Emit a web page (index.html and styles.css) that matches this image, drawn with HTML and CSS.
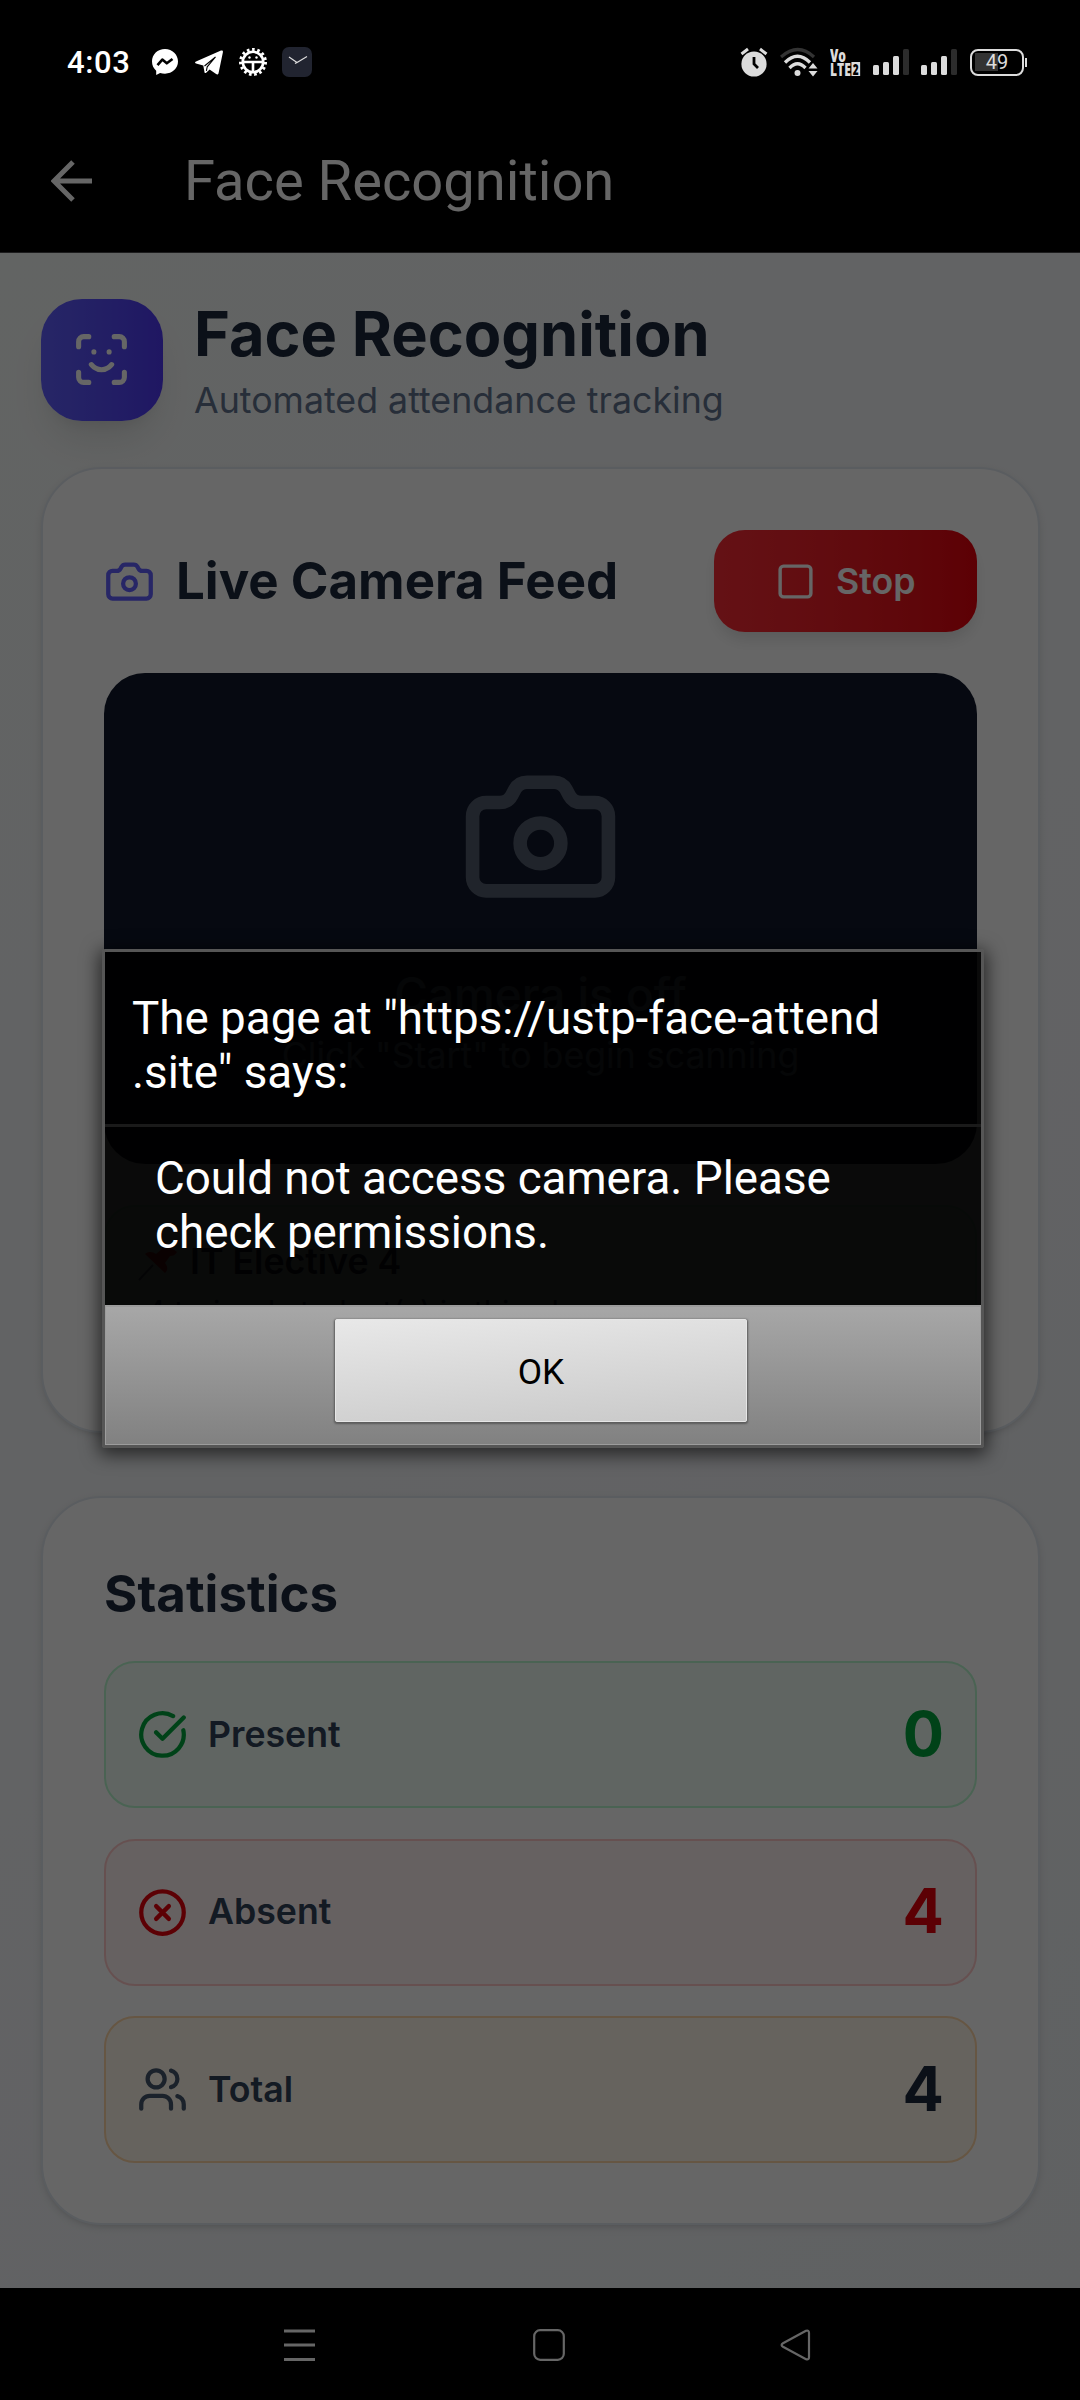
FILE: index.html
```html
<!DOCTYPE html>
<html lang="en">
<head>
<meta charset="utf-8">
<title>Face Recognition</title>
<link rel="stylesheet" href="styles.css">
</head>
<body>
<div class="screen">
  <div class="status">
    <div class="status-left">
      <span class="time">4:03</span>
      <svg class="ic-msgr" width="26" height="26" viewBox="0 0 26 26"><path fill="#fff" d="M13 0C5.600 0 0 5.400 0 12.600c0 3.800 1.600 7 4.200 9.200V26l3.900-2.100c1.500.5 3.200.8 4.900.8 7.400 0 13-5.300 13-12.100S20.400 0 13 0z"/><path fill="none" stroke="#000" stroke-width="2.600" stroke-linejoin="round" d="M5.500 16.200l4.800-5.600 4.500 3.700 5.700-4.300"/></svg>
      <svg class="ic-tg" width="28" height="25" viewBox="0 0 28 25"><path fill="#fff" d="M1 11.500 26 .6c1.300-.5 2.200.2 1.900 1.700L23.600 23c-.3 1.500-1.300 1.900-2.500 1.100l-6.500-4.700-3.400 3.300c-.8.7-1.500.5-1.700-.5L8.300 15.600 1 13.400c-1.300-.4-1.300-1.300 0-1.900z"/><path fill="none" stroke="#000" stroke-width="1.100" d="M9.500 16 20.500 7l-8.300 9.800-.8 4"/></svg>
      <svg class="ic-gear" width="30" height="30" viewBox="0 0 30 30"><circle cx="15" cy="15" r="12.500" fill="none" stroke="#fff" stroke-width="3" stroke-dasharray="2.600 2.636"/><circle cx="15" cy="15" r="10.200" fill="none" stroke="#fff" stroke-width="2.600"/><path stroke="#fff" stroke-width="2.600" d="M5 15h20M15 15v10" fill="none"/><circle cx="11.500" cy="10.500" r="1.200" fill="#fff"/><circle cx="18.500" cy="10.500" r="1.200" fill="#fff"/></svg>
      <svg class="ic-clock" width="30" height="30" viewBox="0 0 30 30"><rect width="30" height="30" rx="7" fill="#212430"/><path d="M7 10l8 5.500L25 9.500M13 16.500l2-1" stroke="#ddd" stroke-width="1.200" fill="none"/></svg>
    </div>
    <div class="status-right">
      <svg class="ic-alarm" width="28" height="30" viewBox="0 0 28 30"><circle cx="14" cy="17" r="12.600" fill="#dcdcdc"/><path d="M1.500 7 8 2M26.500 7 20 2" stroke="#dcdcdc" stroke-width="3"/><path d="M14 10v7l4 4" fill="none" stroke="#000" stroke-width="2.800"/></svg>
      <svg class="ic-wifi" width="38" height="30" viewBox="0 0 38 30"><g fill="none" stroke-width="3.300"><path stroke="#333" d="M1 10Q18 -5 34 10"/><path stroke="#dcdcdc" d="M5 15.500Q17.500 3 30 15.500M9.500 21Q17.500 12.500 25.500 21"/></g><circle cx="17.500" cy="26" r="3" fill="#dcdcdc"/><path fill="#dcdcdc" d="M28.500 21.500h9l-4.500-5.500zM28.500 24h9L33 29.500z"/></svg>
      <div class="volte"><b>Vo</b><b>LTE<i>2</i></b></div>
      <div class="bars"><i class="b1"></i><i class="b2"></i><i class="b3"></i><i class="b4"></i></div>
      <div class="bars"><i class="b1"></i><i class="b2"></i><i class="b3"></i><i class="b4"></i></div>
      <div class="battery"><span>49</span></div>
    </div>
  </div>

  <header class="appbar">
    <svg width="42" height="42" viewBox="0 0 42 42"><path d="M41 21H4M22 2 3 21l19 19" fill="none" stroke="#fff" stroke-width="5"/></svg>
    <span>Face Recognition</span>
  </header>

  <main class="content">
    <section class="hero">
      <div class="logo">
        <svg class="lucide" width="61" height="61" viewBox="0 0 24 24"><path d="M3 7V5a2 2 0 0 1 2-2h2M17 3h2a2 2 0 0 1 2 2v2M21 17v2a2 2 0 0 1-2 2h-2M7 21H5a2 2 0 0 1-2-2v-2M8 14s1.500 2 4 2 4-2 4-2M9 9h.01M15 9h.01"/></svg>
      </div>
      <div>
        <h1>Face Recognition</h1>
        <p>Automated attendance tracking</p>
      </div>
    </section>

    <section class="card feed">
      <div class="feed-head">
        <svg class="lucide cam" width="51" height="51" viewBox="0 0 24 24"><path d="M13.997 4a2 2 0 0 1 1.760 1.050l.486.9A2 2 0 0 0 18.003 7H20a2 2 0 0 1 2 2v9a2 2 0 0 1-2 2H4a2 2 0 0 1-2-2V9a2 2 0 0 1 2-2h1.997a2 2 0 0 0 1.759-1.048l.489-.904A2 2 0 0 1 10.004 4z"/><circle cx="12" cy="13" r="3"/></svg>
        <h2>Live Camera Feed</h2>
        <div class="stop">
          <svg class="lucide" width="41" height="41" viewBox="0 0 24 24"><rect x="3" y="3" width="18" height="18" rx="2"/></svg>
          <span>Stop</span>
        </div>
      </div>
      <div class="video">
        <svg class="lucide" width="163" height="163" viewBox="0 0 24 24"><path d="M13.997 4a2 2 0 0 1 1.760 1.050l.486.9A2 2 0 0 0 18.003 7H20a2 2 0 0 1 2 2v9a2 2 0 0 1-2 2H4a2 2 0 0 1-2-2V9a2 2 0 0 1 2-2h1.997a2 2 0 0 0 1.759-1.048l.489-.904A2 2 0 0 1 10.004 4z"/><circle cx="12" cy="13" r="3"/></svg>
        <p class="off">Camera is off</p>
        <p class="hint">Click "Start" to begin scanning</p>
      </div>
      <div class="info">
        <p class="subject"><svg width="40" height="40" viewBox="0 0 40 40"><path d="M1 38 15 23" stroke="#6b7580" stroke-width="2"/><path fill="#ff2a1a" d="M7 12c4-3 8-2 11 0l6-5c-1-3 0-5 2-7l13 10c-2 3-4 4-7 4l-5 7c3 4 3 7 0 10z"/></svg>IT Elective 4</p>
        <p class="trained">4 trained student(s) in this class</p>
      </div>
    </section>

    <section class="card stats">
      <h2>Statistics</h2>
      <div class="row present">
        <svg class="lucide" width="51" height="51" viewBox="0 0 24 24"><path d="M21.801 10A10 10 0 1 1 17 3.335M9 11l3 3L22 4"/></svg>
        <span>Present</span><b>0</b>
      </div>
      <div class="row absent">
        <svg class="lucide" width="51" height="51" viewBox="0 0 24 24"><circle cx="12" cy="12" r="10"/><path d="m15 9-6 6M9 9l6 6"/></svg>
        <span>Absent</span><b>4</b>
      </div>
      <div class="row total">
        <svg class="lucide" width="51" height="51" viewBox="0 0 24 24"><path d="M16 21v-2a4 4 0 0 0-4-4H6a4 4 0 0 0-4 4v2M22 21v-2a4 4 0 0 0-3-3.870M16 3.130a4 4 0 0 1 0 7.750"/><circle cx="9" cy="7" r="4"/></svg>
        <span>Total</span><b>4</b>
      </div>
    </section>
  </main>

  <nav class="navbar">
    <svg width="31" height="32" viewBox="0 0 31 32"><path d="M0 2h31M0 16h31M0 30.500h31" stroke-width="2.800"/></svg>
    <svg width="32" height="32" viewBox="0 0 32 32"><rect x="1.200" y="1.200" width="29.600" height="29.600" rx="6" stroke-width="2.200"/></svg>
    <svg width="31" height="32" viewBox="0 0 31 32"><path d="M26 1.800 3 14.300q-2.800 1.700 0 3.400L26 30.200q3 1 3-2V3.800q0-3-3-2z" stroke-width="2.200"/></svg>
  </nav>

  <div class="scrim"></div>

  <div class="dialog">
    <div class="dialog-title">The page at "https://ustp-face-attend<br>.site" says:</div>
    <div class="dialog-body">Could not access camera. Please<br>check permissions.</div>
    <div class="dialog-foot"><div class="ok">OK</div></div>
  </div>
</div>
</body>
</html>
```

FILE: styles.css
```css
* { box-sizing: border-box; }
body { margin: 0; background: #000; }
h1, h2, p { margin: 0; }
svg { display: block; flex: none; }

.screen {
  position: relative;
  width: 1080px;
  height: 2400px;
  overflow: hidden;
  display: flex;
  flex-direction: column;
  background: #000;
  font-family: Inter, sans-serif;
}

.lucide {
  fill: none;
  stroke: currentColor;
  stroke-width: 2;
  stroke-linecap: round;
  stroke-linejoin: round;
}

/* Status bar stays above the scrim */
.status {
  position: relative;
  z-index: 3;
  height: 124px;
  padding: 0 56px 0 67px;
  display: flex;
  justify-content: space-between;
  font-family: Roboto, sans-serif;
}
.status-left, .status-right { display: flex; align-items: center; height: 124px; }
.time { width: 85px; padding-top: 1px; color: #fff; font-size: 31px; font-weight: 500; line-height: 36px; letter-spacing: .6px; }
.ic-tg { margin-left: 17px; }
.ic-gear { margin-left: 15px; }
.ic-clock { margin-left: 14px; }
.ic-wifi { margin-left: 12px; }
.volte { width: 31px; margin-left: 12px; color: #dcdcdc; font: 700 18px/14px "Open Sans", sans-serif; }
.volte b { display: flex; width: 46px; height: 14px; transform: scaleX(.67); transform-origin: 0 50%; }
.volte i { margin-left: 1px; padding: 0 2px; background: #dcdcdc; color: #000; font-style: normal; font-size: 15px; }
.bars { display: flex; align-items: flex-end; gap: 4px; height: 27px; margin: -2px 0 0 12px; }
.bars i { width: 6px; border-radius: 1.5px; background: #dcdcdc; }
.bars .b1 { height: 10px; }
.bars .b2 { height: 13px; }
.bars .b3 { height: 19px; }
.bars .b4 { height: 26px; background: #2c2c2c; }
.battery {
  position: relative;
  width: 54px;
  height: 27px;
  margin-left: 13px;
  border: 2px solid #dcdcdc;
  border-radius: 8px;
  display: flex;
  align-items: center;
  justify-content: center;
  background: linear-gradient(#333, #333) 3px 50% / 23px 18px no-repeat;
  color: #dcdcdc;
  font-size: 20px;
  line-height: 23px;
}
.battery::after {
  content: "";
  position: absolute;
  right: -5px;
  top: 7px;
  width: 2px;
  height: 9px;
  background: #dcdcdc;
}

.appbar {
  height: 128px;
  padding: 0 51px 15px;
  display: flex;
  align-items: center;
  gap: 91px;
  color: #fff;
  font: 400 56.1px/66px Roboto, sans-serif;
}

.content {
  height: 2036px;
  padding: 46px 40px 0 41px;
  border-top: 1px solid #46464a;
  background: linear-gradient(135deg, #f6f9f8, #f5f7fa 50%, #f0f3f6);
}
.hero { display: flex; gap: 31px; height: 122px; margin-bottom: 46px; }
.logo {
  width: 122px;
  height: 122px;
  padding: 0 1px 1px 0;
  border-radius: 41px;
  display: flex;
  align-items: center;
  justify-content: center;
  color: #fff;
  background: linear-gradient(90deg in oklab, #615fff, #4f39f6);
  box-shadow: 0 25px 38px -8px rgba(0, 0, 0, .1), 0 10px 15px -10px rgba(0, 0, 0, .1);
}
.hero h1 { color: #1d293d; font-size: 61.3px; line-height: 71px; font-weight: 700; }
.hero p { color: #62748e; font-size: 35.75px; line-height: 51px; margin-top: 5px; }

.card {
  border: 2px solid #e2e8f0;
  border-radius: 61px;
  padding: 61px;
  background: #fff;
  box-shadow: 0 3px 8px rgba(0, 0, 0, .1), 0 3px 5px -3px rgba(0, 0, 0, .1);
}
.card h2 { color: #1d293d; font-size: 51px; line-height: 69px; font-weight: 700; }
.feed { height: 966px; margin-bottom: 63px; }
.feed-head { display: flex; align-items: center; height: 102px; margin-bottom: 41px; }
.feed-head h2 { padding-bottom: 2px; }
.cam { color: #615fff; margin-right: 21px; }
.stop {
  margin-left: auto;
  height: 102px;
  width: 263px;
  padding-left: 61px;
  border-radius: 31px;
  display: flex;
  align-items: center;
  gap: 20px;
  color: #fff;
  font-size: 35.7px;
  font-weight: 600;
  background: linear-gradient(90deg in oklab, #fb2c36, #e7000b);
  box-shadow: 0 10px 15px -3px rgba(0, 0, 0, .12);
}
.video {
  height: 491px;
  padding-top: 82px;
  border-radius: 41px;
  display: flex;
  flex-direction: column;
  align-items: center;
  background: #0f172b;
  color: #90a1b9;
}
.video svg { color: #525b6b; }
.off { margin-top: 41px; font-size: 45.9px; line-height: 71px; font-weight: 500; }
.hint { font-size: 35.7px; line-height: 51px; }
.info {
  height: 165px;
  margin-top: 41px;
  padding: 29px 32px;
  border: 2px solid #b9f8cf;
  border-radius: 31px;
  background: #f0fdf4;
}
.subject { display: flex; align-items: center; gap: 12px; color: #1d293d; font-size: 35.7px; line-height: 51px; font-weight: 600; }
.trained { margin-top: 4px; padding-left: 8px; color: #45556c; font-size: 30.6px; line-height: 41px; }

.stats { height: 729px; }
.stats h2 { margin-bottom: 33px; }
.row {
  height: 147px;
  margin-bottom: 30.6px;
  padding: 0 31px;
  border: 2px solid;
  border-radius: 31px;
  display: flex;
  align-items: center;
}
.row span { margin-left: 20px; padding-bottom: 2px; color: #314158; font-size: 35.7px; font-weight: 600; }
.row b { margin-left: auto; padding-bottom: 2px; font-size: 61.2px; line-height: 82px; }
.present { border-color: #b9f8cf; background: #f0fdf4; color: #00a63e; }
.absent { border-color: #ffc9c9; background: #fef2f2; color: #e7000b; }
.total { border-color: #ffd6a7; background: #fff8eb; color: #45556c; }
.total b { color: #1d293d; }

.navbar { height: 112px; display: flex; align-items: flex-start; padding: 41px 0 0 284px; background: #000; }
.navbar svg { fill: none; stroke: #fff; }
.navbar svg:nth-child(2) { margin-left: 218px; }
.navbar svg:nth-child(3) { margin-left: 215px; }

.scrim { position: absolute; inset: 0; z-index: 1; background: rgba(0, 0, 0, .6); }

.dialog {
  position: absolute;
  z-index: 2;
  left: 102px;
  top: 949px;
  width: 882px;
  height: 499px;
  border: 3px solid #565656;
  border-radius: 3px;
  display: flex;
  flex-direction: column;
  color: #fff;
  font: 400 45.75px/54px Roboto, sans-serif;
  background: rgba(0, 0, 0, .9);
  background-clip: padding-box;
  box-shadow: 0 4px 18px 3px rgba(0, 0, 0, .6);
}
.dialog-title { height: 175px; padding: 40px 27px 0; border-bottom: 3px solid #1a1a1a; }
.dialog-body { height: 178px; padding: 25px 50px 0; }
.dialog-foot {
  flex: 1;
  display: flex;
  justify-content: center;
  padding-top: 12px;
  border: solid #9c9c9c;
  border-width: 2px 1px 1px;
  background: linear-gradient(#a7a7a7, #818181);
}
.ok {
  width: 412px;
  height: 103px;
  margin-right: 4px;
  border: 1px solid #e6e6e6;
  border-radius: 2px;
  color: #000;
  font-size: 35.4px;
  line-height: 104px;
  text-align: center;
  background: linear-gradient(175deg, #e8e8e8, #c9c9c9);
  box-shadow: 0 1px 2px 1px #5c5c5c;
}
```
